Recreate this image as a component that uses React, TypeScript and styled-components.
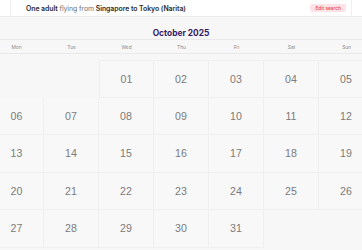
import React from 'react';
import styled, {createGlobalStyle} from 'styled-components';

const GlobalStyle = createGlobalStyle`
  html, body {
    margin: 0;
    padding: 0;
    background: #f7f7f7;
    overflow: hidden;
  }
  * {
    box-sizing: border-box;
  }
`;

const Page = styled.div`
  width: 362px;
  height: 250px;
  overflow: hidden;
  font-family: Inter, "Liberation Sans", sans-serif;
`;

const TopBar = styled.header`
  height: 17px;
  background: #ffffff;
  border-bottom: 1px solid #ececec;
`;

const TopBarInner = styled.div`
  height: 100%;
  margin: 0 10px;
  padding: 0 5px 0 15px;
  border-left: 1px solid #efefef;
  border-right: 1px solid #efefef;
  display: flex;
  align-items: center;
  justify-content: space-between;
`;

const Summary = styled.p`
  margin: 0;
  font-size: 6.9px;
  color: #2a2a2a;
  font-weight: 600;
  letter-spacing: -0.05px;
`;

const Muted = styled.span`
  font-weight: 400;
  color: #6f6f6f;
`;

const EditButton = styled.button`
  height: 8px;
  padding: 0 5px;
  border: none;
  border-radius: 2px;
  background: #fde3e5;
  color: #e5434e;
  font-family: Inter, "Liberation Sans", sans-serif;
  font-size: 4.8px;
  font-weight: 500;
  line-height: 8px;
`;

const MonthTitle = styled.h2`
  margin: 0;
  padding-top: 11px;
  height: 22px;
  line-height: 11px;
  text-align: center;
  font-size: 8.4px;
  font-weight: 700;
  color: #351863;
`;

const WeekRow = styled.div`
  height: 15px;
  border-top: 1px solid #e9e9e9;
  border-bottom: 1px solid #e9e9e9;
  display: grid;
  grid-template-columns: repeat(7, 55px);
  margin-left: -11px;
  width: 385px;
  align-items: center;
`;

const WeekDay = styled.span`
  text-align: center;
  font-size: 4.8px;
  color: #8a8a8a;
`;

const DaysGrid = styled.div`
  margin-top: 6px;
  margin-left: -11px;
  width: 385px;
  display: grid;
  grid-template-columns: repeat(7, 55px);
  grid-auto-rows: 37.5px;
`;

const Blank = styled.div``;

const DayCell = styled.div<{ $top?: boolean; $left?: boolean }>`
  display: flex;
  align-items: center;
  justify-content: center;
  background: #f8f8f8;
  border-right: 1px solid #efefef;
  border-bottom: 1px solid #efefef;
  border-top: ${p => (p.$top ? '1px solid #efefef' : 'none')};
  border-left: ${p => (p.$left ? '1px solid #efefef' : 'none')};
  font-family: "Liberation Sans", Arial, sans-serif;
  font-size: 10.6px;
  color: #7b7b7b;
`;

const weekDays = ['Mon', 'Tue', 'Wed', 'Thu', 'Fri', 'Sat', 'Sun'];
const offset = 2;
const days = Array.from({length: 31}, (_, i) => i + 1);

export default function App() {
	return (
		<Page>
			<GlobalStyle/>
			<TopBar>
				<TopBarInner>
					<Summary>
						One adult <Muted>flying from</Muted> Singapore to Tokyo (Narita)
					</Summary>
					<EditButton>Edit search</EditButton>
				</TopBarInner>
			</TopBar>
			<MonthTitle>October 2025</MonthTitle>
			<WeekRow>
				{weekDays.map(d => <WeekDay key={d}>{d}</WeekDay>)}
			</WeekRow>
			<DaysGrid>
				{Array.from({length: offset}, (_, i) => <Blank key={'b' + i}/>)}
				{days.map(d => {
					const idx = d - 1 + offset;
					return (
						<DayCell key={d} $top={idx < 7} $left={idx % 7 === 0 || d === 1}>
							{String(d).padStart(2, '0')}
						</DayCell>
					);
				})}
			</DaysGrid>
		</Page>
	);
}
